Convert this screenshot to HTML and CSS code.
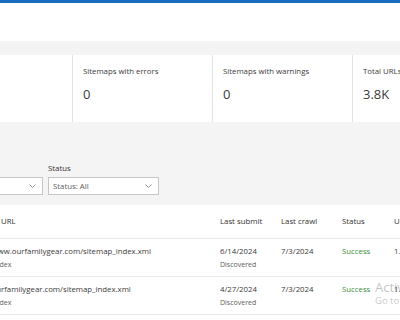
FILE: index.html
```html
<!DOCTYPE html>
<html>
<head>
<meta charset="utf-8">
<link rel="stylesheet" href="styles.css">
</head>
<body>
<div class="topbar"></div>
<div class="header"></div>
<div class="content">
  <div class="cards">
    <div class="card"><div class="card-label">Sitemaps</div><div class="card-value">3</div></div>
    <div class="card"><div class="card-label">Sitemaps with errors</div><div class="card-value">0</div></div>
    <div class="card"><div class="card-label">Sitemaps with warnings</div><div class="card-value">0</div></div>
    <div class="card"><div class="card-label">Total URLs discovered</div><div class="card-value">3.8K</div></div>
  </div>
  <div class="filters">
    <div class="filter">
      <div class="filter-label">Type</div>
      <div class="select"><span class="select-text">Type: All</span><svg class="chev" width="7" height="4" viewBox="0 0 7 4"><path d="M0.5 0.5 L3.5 3.5 L6.5 0.5" fill="none" stroke="#8a8886" stroke-width="0.9"/></svg></div>
    </div>
    <div class="filter">
      <div class="filter-label">Status</div>
      <div class="select"><span class="select-text">Status: All</span><svg class="chev" width="7" height="4" viewBox="0 0 7 4"><path d="M0.5 0.5 L3.5 3.5 L6.5 0.5" fill="none" stroke="#8a8886" stroke-width="0.9"/></svg></div>
    </div>
  </div>
  <div class="table">
    <div class="row head">
      <div class="cell th-url">URL</div>
      <div class="cell">Last submit</div>
      <div class="cell">Last crawl</div>
      <div class="cell">Status</div>
      <div class="cell">URLs discovered</div>
    </div>
    <div class="row">
      <div class="cell cell-url"><div class="main">https://www.ourfamilygear.com/sitemap_index.xml</div><div class="sub">Sitemap index</div></div>
      <div class="cell"><div class="main">6/14/2024</div><div class="sub">Discovered</div></div>
      <div class="cell"><div class="main">7/3/2024</div></div>
      <div class="cell"><div class="main success">Success</div></div>
      <div class="cell"><div class="main">1.9K</div></div>
    </div>
    <div class="row">
      <div class="cell cell-url"><div class="main">https://ourfamilygear.com/sitemap_index.xml</div><div class="sub">Sitemap index</div></div>
      <div class="cell"><div class="main">4/27/2024</div><div class="sub">Discovered</div></div>
      <div class="cell"><div class="main">7/3/2024</div></div>
      <div class="cell"><div class="main success">Success</div></div>
      <div class="cell"><div class="main">1.9K</div></div>
    </div>
  </div>
</div>
<div class="watermark">
  <div class="wm-title">Activate Windows</div>
  <div class="wm-sub">Go to Settings to activate Windows.</div>
</div>
</body>
</html>
```
FILE: styles.css
```css
html, body {
  margin: 0;
  padding: 0;
}
body {
  width: 400px;
  height: 320px;
  overflow: hidden;
  position: relative;
  font-family: "Open Sans", "Noto Sans", sans-serif;
  color: #323130;
  background: #ffffff;
}
.topbar {
  height: 3px;
  background: #1a6cbf;
}
.header {
  height: 38px;
  background: #ffffff;
}
.content {
  background: #f4f4f4;
  padding-top: 14px;
}
.cards {
  display: flex;
  margin-left: -68px;
  width: 700px;
  background: #ffffff;
  height: 67px;
}
.card {
  width: 140px;
  box-sizing: border-box;
  border-left: 1px solid #e3e3e3;
  padding: 10px 10px 0 10px;
  white-space: nowrap;
}
.card:first-child {
  border-left: none;
}
.card-label {
  font-size: 7.8px;
  line-height: 12px;
  color: #3b3a39;
}
.card-value {
  font-size: 13px;
  line-height: 18px;
  margin-top: 8px;
  color: #3b3a39;
}
.filters {
  display: flex;
  gap: 5px;
  margin-left: -68px;
  padding: 40px 0 10px 0;
}
.filter-label {
  font-size: 7.8px;
  line-height: 12px;
  margin-bottom: 3px;
  color: #323130;
}
.select {
  width: 111px;
  height: 18px;
  box-sizing: border-box;
  border: 1px solid #c8c6c4;
  background: #ffffff;
  display: flex;
  align-items: center;
  justify-content: space-between;
  padding: 0 6px 0 4px;
}
.select-text {
  font-size: 7.8px;
  color: #605e5c;
}
.chev {
  display: block;
}
.table {
  background: #ffffff;
  margin-left: -68px;
  width: 700px;
  height: 120px;
}
.row {
  display: grid;
  grid-template-columns: 288px 61px 61px 52px 200px;
  border-bottom: 1px solid #ebebeb;
  padding: 6px 0 5px 0;
  white-space: nowrap;
}
.row.head {
  padding: 10px 0 10px 0;
  font-size: 7.8px;
  line-height: 13px;
  color: #323130;
}
.cell {
  overflow: hidden;
}
.th-url {
  padding-left: 69px;
}
.cell-url {
  padding-left: 33px;
}
.main {
  font-size: 7.8px;
  line-height: 12px;
  color: #3b3a39;
}
.sub {
  font-size: 7px;
  line-height: 12px;
  margin-top: 2px;
  color: #605e5c;
}
.success {
  color: #3a8e3a;
}
.watermark {
  position: absolute;
  left: 375px;
  top: 280px;
  white-space: nowrap;
  color: rgba(120, 120, 120, 0.45);
}
.wm-title {
  font-size: 13px;
  line-height: 15px;
}
.wm-sub {
  font-size: 9.5px;
  line-height: 12px;
}
```
